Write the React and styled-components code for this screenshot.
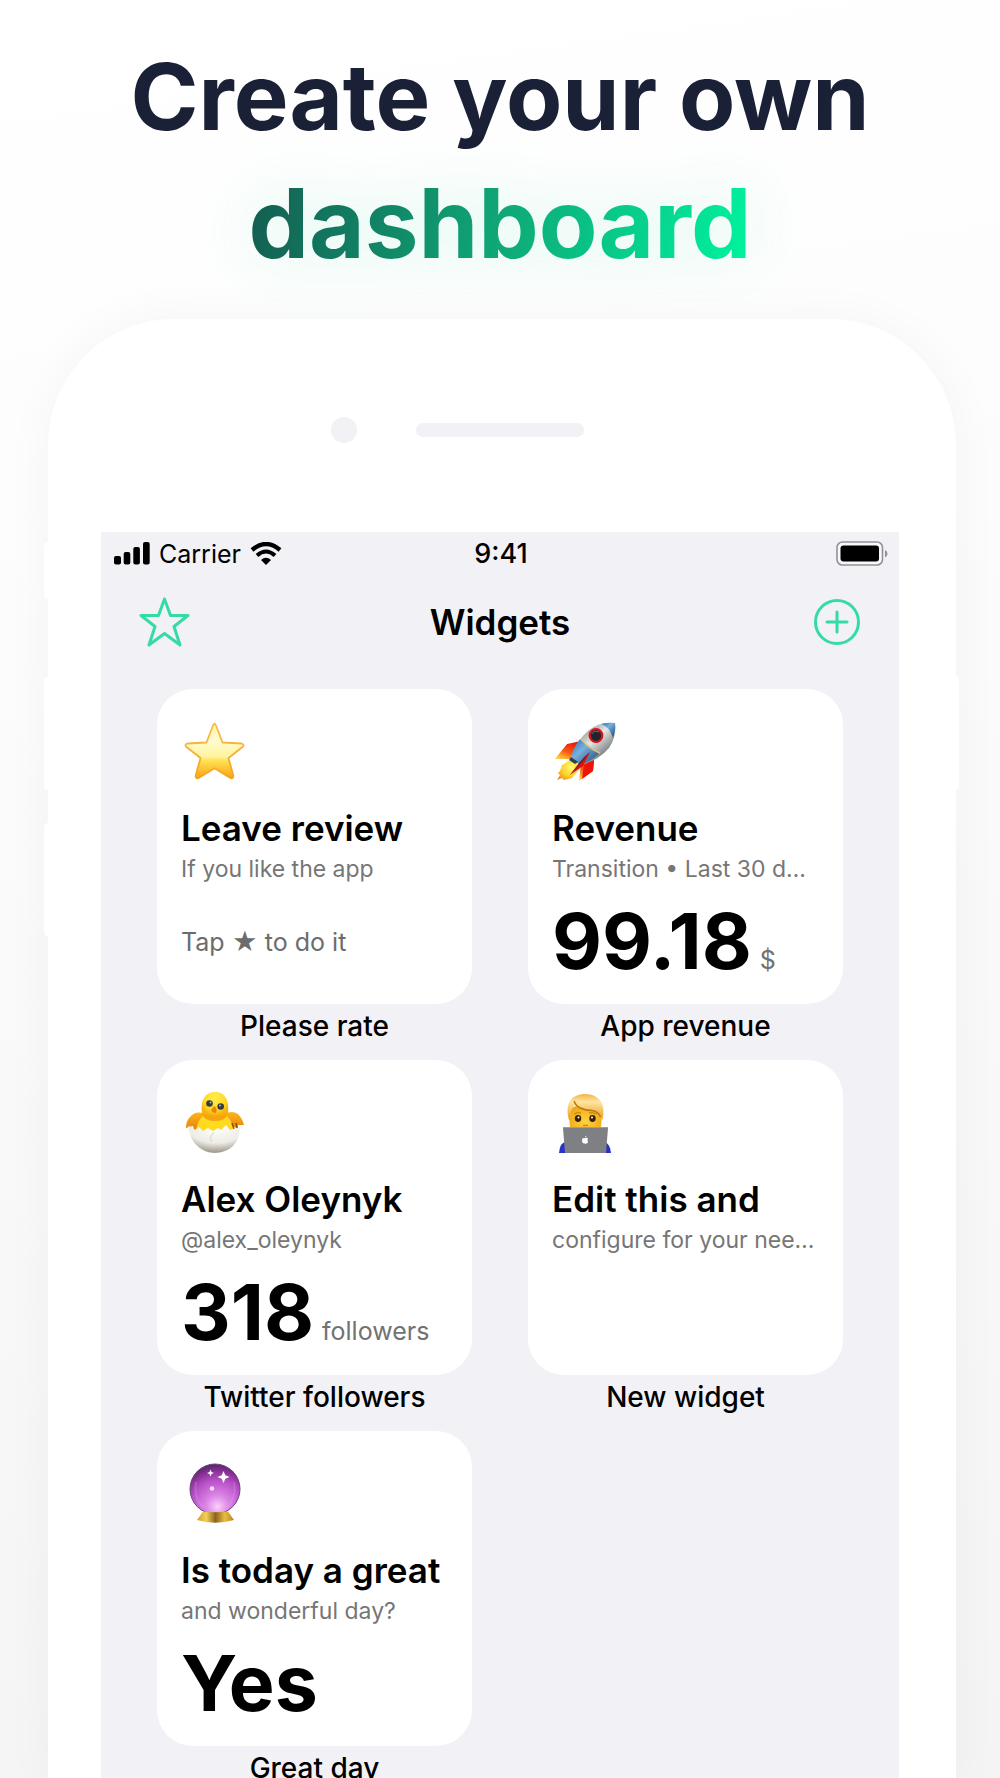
import React from "react";
import styled, { createGlobalStyle, css } from "styled-components";

const GlobalStyle = createGlobalStyle`
  * { box-sizing: border-box; }
  body {
    margin: 0;
    background: #ffffff;
    font-family: Inter, "Liberation Sans", sans-serif;
    color: #000000;
  }
`;

const ACCENT = "#35dba5";
const SURFACE = "#f2f1f6";

const Page = styled.main`
  display: flex;
  flex-direction: column;
  height: 100vh;
  overflow: hidden;
  background: linear-gradient(172deg, #ffffff 0%, #fdfdfd 25%, #f4f4f4 100%);
`;

const Headline = styled.h1`
  margin: 0;
  padding: 34px 24px 33px;
  text-align: center;
  font-size: 92px;
  line-height: 126px;
  font-weight: 700;
  color: #1a2036;
`;

const Highlight = styled.span`
  display: block;
  width: fit-content;
  margin: 0 auto;
  font-size: 96px;
  color: transparent;
  background: linear-gradient(100deg, #145c50 0%, #0fa777 50%, #00f59f 100%);
  background-clip: text;
  -webkit-background-clip: text;
  filter: drop-shadow(0 0 32px rgba(0, 220, 150, 0.16));
`;

const Phone = styled.section`
  position: relative;
  flex: 1 0 auto;
  display: flex;
  flex-direction: column;
  margin: 0 44px 0 48px;
  padding: 0 57px 0 53px;
  border-radius: 126px 126px 0 0;
  background: #ffffff;
  box-shadow: 0 0 50px rgba(0, 0, 0, 0.04);
`;

const SideKey = styled.span`
  position: absolute;
  top: ${(p) => p.$top}px;
  width: 4px;
  height: ${(p) => p.$height}px;
  background: #ffffff;
  ${(p) =>
    p.$right
      ? css`right: -3px; border-radius: 0 4px 4px 0;`
      : css`left: -4px; border-radius: 4px 0 0 4px;`}
`;

const Bezel = styled.div`
  display: grid;
  grid-template-columns: 1fr 168px 1fr;
  align-items: center;
  height: 213px;
  padding-top: 9px;
`;

const Camera = styled.span`
  justify-self: end;
  width: 26px;
  height: 26px;
  margin-right: 59px;
  border-radius: 50%;
  background: ${SURFACE};
`;

const Speaker = styled.span`
  height: 14px;
  border-radius: 7px;
  background: ${SURFACE};
`;

const Screen = styled.div`
  flex: 1;
  background: ${SURFACE};
`;

const StatusBar = styled.div`
  display: grid;
  grid-template-columns: 1fr auto 1fr;
  align-items: center;
  height: 44px;
  padding: 0 11px 0 13px;
  font-size: 25px;
  line-height: 32px;
`;

const Signal = styled.div`
  display: flex;
  align-items: center;
  gap: 9px;
`;

const Clock = styled.time`
  font-size: 27px;
  font-weight: 500;
`;

const BatteryIcon = styled.svg`
  justify-self: end;
`;

const NavBar = styled.header`
  display: grid;
  grid-template-columns: 1fr auto 1fr;
  align-items: center;
  height: 92px;
  padding: 0 38px;
`;

const NavTitle = styled.h2`
  margin: 0;
  font-size: 35px;
  line-height: 40px;
  font-weight: 600;
`;

const IconButton = styled.button`
  display: flex;
  justify-self: ${(p) => (p.$end ? "end" : "start")};
  padding: 0;
  border: 0;
  background: none;
  color: ${ACCENT};
  cursor: pointer;
`;

const WidgetGrid = styled.ul`
  display: grid;
  grid-template-columns: repeat(2, minmax(0, 1fr));
  gap: 18px 56px;
  margin: 0;
  padding: 21px 56px 0;
  list-style: none;
`;

const Card = styled.article`
  display: flex;
  flex-direction: column;
  aspect-ratio: 1;
  padding: 30px 24px 0;
  border-radius: 36px;
  background: #ffffff;
`;

const CardTitle = styled.h3`
  margin: 25px 0 5px;
  font-size: 35px;
  line-height: 40px;
  font-weight: 600;
  white-space: nowrap;
`;

const Subtitle = styled.p`
  margin: 0;
  font-size: 23px;
  line-height: 32px;
  color: #767676;
  white-space: nowrap;
`;

const ValueRow = styled.div`
  display: flex;
  align-items: baseline;
  gap: 8px;
  margin-top: 16px;
  line-height: 80px;
  white-space: nowrap;
`;

const Value = styled.strong`
  font-size: 77px;
  font-weight: 700;
`;

const Note = styled.span`
  font-size: 25px;
  color: #727272;
`;

const Hint = styled.p`
  margin: 17px 0 0;
  font-size: 25px;
  line-height: 80px;
  color: #6c6c6c;
  white-space: nowrap;
`;

const Caption = styled.p`
  margin: 6px 0 0;
  text-align: center;
  font-size: 28px;
  line-height: 32px;
  font-weight: 500;
`;

const StarEmoji = () => (
  <svg width="64" height="64" viewBox="-1 0 64 64" aria-hidden="true">
    <defs>
      <linearGradient id="starFill" x1="0" y1="0" x2="0" y2="1">
        <stop offset="0" stopColor="#fff2a0" />
        <stop offset=".3" stopColor="#fffbd2" />
        <stop offset=".6" stopColor="#fff49c" />
        <stop offset=".68" stopColor="#ffe052" />
        <stop offset="1" stopColor="#fba313" />
      </linearGradient>
      <linearGradient id="starEdge" x1="0" y1="0" x2="0" y2="1">
        <stop offset="0" stopColor="#f7bd4c" />
        <stop offset="1" stopColor="#f5a51c" />
      </linearGradient>
    </defs>
    <path d="M31 6.500 Q32.500 3 34 6.500 L40.500 23.500 L59.500 24.500 Q63 25.500 60.500 28 L46.500 39 L51.300 56.500 Q51.500 60.500 48 58.800 L32.500 49.200 L17 58.800 Q13.500 60.500 13.700 56.500 L18.500 39 L4.500 28 Q2 25.500 5.500 24.500 L24.500 23.500 Z" fill="url(#starFill)" stroke="url(#starEdge)" strokeWidth="1.800" strokeLinejoin="round" />
  </svg>
);

const RocketEmoji = () => (
  <svg width="64" height="64" viewBox="-1 0 64 64" aria-hidden="true">
    <defs>
      <linearGradient id="hull" x1=".2" y1=".2" x2=".75" y2=".8">
        <stop offset="0" stopColor="#8c9295" />
        <stop offset=".45" stopColor="#e6e7e3" />
        <stop offset="1" stopColor="#73777a" />
      </linearGradient>
      <linearGradient id="blueHull" x1="0" y1="0" x2="1" y2="1">
        <stop offset="0" stopColor="#2b6ca8" />
        <stop offset=".4" stopColor="#78b0de" />
        <stop offset="1" stopColor="#1a426e" />
      </linearGradient>
      <linearGradient id="fin" x1=".8" y1="0" x2=".2" y2="1">
        <stop offset="0" stopColor="#e80d08" />
        <stop offset=".6" stopColor="#fa5b12" />
        <stop offset="1" stopColor="#ffd23c" />
      </linearGradient>
      <radialGradient id="flame" cx=".6" cy=".4" r=".7">
        <stop offset="0" stopColor="#fffa72" />
        <stop offset=".6" stopColor="#ffd02c" />
        <stop offset="1" stopColor="#f08c18" />
      </radialGradient>
    </defs>
    <path d="M28 22 L14 25 L2 40 L18 40 Z" fill="url(#fin)" />
    <path d="M28 44 L26 62 L40 52 L41 41 Z" fill="url(#fin)" />
    <path d="M31 46 L29 60 L40 52 L41 41 Z" fill="#ee1207" />
    <path d="M19 40 L9 46 L7 52 L5 54 L7 56 L4 61 L9 59 L11 61 L19 59 L28 48 Z" fill="url(#flame)" />
    <path d="M18 39 Q22 23 36 11 Q48 2 62 4 Q64 17 56 29 Q45 42 27 46 Z" fill="url(#hull)" />
    <path d="M18 39 Q20 29 27 20 L46 35 Q37 43 27 46 Z" fill="url(#blueHull)" />
    <path d="M48 5 Q55 3 62 4 Q63 11 60 19 Q56 7 48 5 Z" fill="url(#blueHull)" />
    <path d="M28 20 Q36 30 47 34" stroke="#d8c57b" strokeWidth="1.500" fill="none" />
    <circle cx="43" cy="16.500" r="6.300" fill="#20252c" stroke="#d01520" strokeWidth="2.300" />
    <path d="M39 15 Q41 11 46 13" stroke="#65717b" strokeWidth="1" fill="none" />
    <path d="M37 33 L31 38 L17 56 L30 47 Z" fill="#d71413" />
    <path d="M37 33 L29 43 L17 56 L27 43 Z" fill="#68202b" />
    <path d="M18 38 L25 43 L22 45 L16 41 Z" fill="#31404f" />
  </svg>
);

const ChickEmoji = () => (
  <svg width="64" height="64" viewBox="-1 0 64 64" aria-hidden="true">
    <defs>
      <radialGradient id="chick" cx=".5" cy=".2" r=".6">
        <stop offset="0" stopColor="#fff04f" />
        <stop offset=".7" stopColor="#ffd822" />
        <stop offset="1" stopColor="#f7b20f" />
      </radialGradient>
      <linearGradient id="wing" x1="0" y1="0" x2="0" y2="1">
        <stop offset="0" stopColor="#ffb41c" />
        <stop offset="1" stopColor="#e58109" />
      </linearGradient>
      <radialGradient id="shell" cx=".55" cy=".1" r=".9">
        <stop offset="0" stopColor="#fffffd" />
        <stop offset=".6" stopColor="#edece5" />
        <stop offset="1" stopColor="#9b958a" />
      </radialGradient>
    </defs>
    <path d="M23 24 Q14 20 8 27 Q4 31 4 38 L11 36 L12 40 L19 38 Z" fill="url(#wing)" />
    <path d="M42 24 Q50 20 56 24 Q60 28 62 35 L56 35 L56 39 L51 36 L48 40 Z" fill="url(#wing)" />
    <path d="M14 42 Q15 31 21 26 H45 Q51 32 52 42 Z" fill="#ffdb20" />
    <path d="M20 23 C18 10 23 2 33 2 C44 2 47 11 46 23 Q44 31 33 31 Q22 31 20 23 Z" fill="url(#chick)" />
    <path d="M20 23 Q32 29 46 23 Q44 31 33 31 Q22 31 20 23 Z" fill="#f49d10" opacity=".65" />
    <circle cx="27.500" cy="13.500" r="3.300" fill="#343b3d" />
    <circle cx="38.700" cy="16.500" r="3.300" fill="#343b3d" />
    <circle cx="28.500" cy="12.500" r="1" fill="#a5b3b5" />
    <circle cx="38" cy="15.500" r="1" fill="#a5b3b5" />
    <path d="M32 16 Q36 18 34 22.500 Q31 24 29 20 Z" fill="#e98408" />
    <path d="M50 33 L52 39 M54 33 L55 38" stroke="#8a520c" strokeWidth="1.500" />
    <path d="M6 36 L10 37 L13 40 L17 37 L21 41 L26 38 L31 41 L36 38 L39 40 L44 35 L48 40 L58 37 Q57 62 32 63 Q10 61 6 36 Z" fill="url(#shell)" />
    <path d="M32 42 L28 48 L30 52" fill="none" stroke="#dcd5c6" />
  </svg>
);

const CoderEmoji = () => (
  <svg width="64" height="64" viewBox="0 0 64 64" aria-hidden="true">
    <defs>
      <radialGradient id="face" cx=".5" cy=".6" r=".6">
        <stop offset="0" stopColor="#ffd33e" />
        <stop offset="1" stopColor="#efa512" />
      </radialGradient>
      <linearGradient id="hair" x1="0" y1="0" x2="0" y2="1">
        <stop offset="0" stopColor="#f0b54a" />
        <stop offset=".3" stopColor="#ffe5a0" />
        <stop offset="1" stopColor="#e99b1d" />
      </linearGradient>
    </defs>
    <path d="M7 63 Q8 52 14 52 H53 Q58 54 59 63 Z" fill="#2a31c8" />
    <path d="M17 20 Q17 32 19 44 H48 Q50 32 50 20 Q35 7 17 20 Z" fill="url(#face)" />
    <path d="M17 30 C12 11 21 4 34 4 C49 5 54 16 50.500 30 L48.500 25 Q44 20 33 20 Q27 19 23 15 Q18 19 18 30 Z" fill="url(#hair)" />
    <path d="M22 11 Q25 20 40 20.500 Q46 21 48.500 27" fill="none" stroke="#b87412" strokeWidth="1.300" />
    <path d="M22 24 Q25 22 29 23 M37 23 Q41 22 44.500 24" stroke="#b5790f" strokeWidth="1" fill="none" />
    <ellipse cx="26" cy="28.500" rx="3.200" ry="3.400" fill="#3b2108" />
    <ellipse cx="40.500" cy="28.500" rx="3.200" ry="3.400" fill="#3b2108" />
    <circle cx="26.500" cy="27.500" r="1" fill="#ffffff" />
    <circle cx="40" cy="27.500" r="1" fill="#ffffff" />
    <path d="M31 35.500 H36" fill="none" stroke="#d18a12" strokeWidth="1.500" />
    <path d="M11 38 Q11 37 12 37 H55 Q56 37 56 38 L54 63 H13 Z" fill="#7f8083" />
    <path d="M11.500 37.500 H55.500" stroke="#9d9ea1" strokeWidth="1" />
    <path d="M33 48.200 Q35 47 36 48.500 Q34.500 50 36.200 52 Q34.500 54.500 33 53.500 Q30.500 54 30 51 Q30 47 33 48.200 Z M33 47.500 Q33 45.800 34.700 45.500 Q34.500 47 33 47.500 Z" fill="#ffffff" />
  </svg>
);

const CrystalEmoji = () => (
  <svg width="64" height="64" viewBox="-1 0 64 64" aria-hidden="true">
    <defs>
      <radialGradient id="orb" cx=".55" cy=".85" r=".88">
        <stop offset="0" stopColor="#fbd0fb" />
        <stop offset=".25" stopColor="#dd87e6" />
        <stop offset=".6" stopColor="#b850c8" />
        <stop offset=".85" stopColor="#7c2c8a" />
        <stop offset="1" stopColor="#432653" />
      </radialGradient>
      <linearGradient id="stand" x1="0" y1="0" x2="1" y2="0">
        <stop offset="0" stopColor="#d39c2b" />
        <stop offset=".25" stopColor="#f1d15b" />
        <stop offset=".5" stopColor="#8c621b" />
        <stop offset=".75" stopColor="#e8bd41" />
        <stop offset="1" stopColor="#ba8326" />
      </linearGradient>
    </defs>
    <circle cx="33" cy="28" r="25" fill="url(#orb)" stroke="#67457c" strokeWidth="1" />
    <path d="M14 21 Q11 39 23 47 M52 21 Q55 37 44 47" fill="none" stroke="#e9a8ef" strokeWidth="2" opacity=".25" />
    <path d="M21 50.500 Q33 52 46 50.500 L52 59 Q33 64.500 15 59 Z" fill="url(#stand)" />
    <path d="M41.500 10 L43.300 14.200 L47.500 16 L43.300 17.800 L41.500 22 L39.700 17.800 L35.500 16 L39.700 14.200 Z" fill="#ffffff" />
    <path d="M28.500 8.500 L29.500 11 L32 12 L29.500 13 L28.500 15.500 L27.500 13 L25 12 L27.500 11 Z" fill="#ffffff" />
    <circle cx="30" cy="27.500" r="2.300" fill="#f8d6fa" />
  </svg>
);

const SignalBars = () => (
  <svg width="36" height="24" viewBox="0 0 36 24" role="img" aria-label="Signal strength">
    <rect x="0" y="14" width="7" height="8.500" rx="2" />
    <rect x="9.700" y="10" width="6.600" height="12.500" rx="2" />
    <rect x="19.300" y="5" width="6.600" height="17.500" rx="2" />
    <rect x="29" y="0" width="6.700" height="22.500" rx="2" />
  </svg>
);

const Wifi = () => (
  <svg width="32" height="24" viewBox="0 0 32 24" role="img" aria-label="Wi-Fi">
    <path d="M2 8 Q16 -4 30 8" fill="none" stroke="#000" strokeWidth="4.300" />
    <path d="M7 13.500 Q16 5.500 25 13.500" fill="none" stroke="#000" strokeWidth="4" />
    <path d="M11 18 Q16 13.500 21 18 L16 23 Z" />
  </svg>
);

const widgets = [
  { icon: <StarEmoji />, title: "Leave review", subtitle: "If you like the app", hint: true, caption: "Please rate" },
  { icon: <RocketEmoji />, title: "Revenue", subtitle: "Transition • Last 30 d…", value: "99.18", unit: "$", caption: "App revenue" },
  { icon: <ChickEmoji />, title: "Alex Oleynyk", subtitle: "@alex_oleynyk", value: "318", unit: "followers", caption: "Twitter followers" },
  { icon: <CoderEmoji />, title: "Edit this and", subtitle: "configure for your nee…", caption: "New widget" },
  { icon: <CrystalEmoji />, title: "Is today a great", subtitle: "and wonderful day?", value: "Yes", caption: "Great day" },
];

const Widget = ({ icon, title, subtitle, value, unit, hint, caption }) => (
  <li>
    <Card>
      {icon}
      <CardTitle>{title}</CardTitle>
      <Subtitle>{subtitle}</Subtitle>
      {hint && <Hint>Tap ★ to do it</Hint>}
      {value && (
        <ValueRow>
          <Value>{value}</Value>
          {unit && <Note>{unit}</Note>}
        </ValueRow>
      )}
    </Card>
    <Caption>{caption}</Caption>
  </li>
);

export default function App() {
  return (
    <Page>
      <GlobalStyle />
      <Headline>
        Create your own <Highlight>dashboard</Highlight>
      </Headline>
      <Phone>
        <SideKey $top={223} $height={57} />
        <SideKey $top={358} $height={113} />
        <SideKey $top={504} $height={113} />
        <SideKey $right $top={357} $height={114} />
        <Bezel>
          <Camera />
          <Speaker />
        </Bezel>
        <Screen>
          <StatusBar>
            <Signal>
              <SignalBars />
              <span>Carrier</span>
              <Wifi />
            </Signal>
            <Clock>9:41</Clock>
            <BatteryIcon width="52" height="26" viewBox="0 0 52 26" role="img" aria-label="Battery full">
              <rect x="1" y="1" width="45.500" height="23" rx="5.500" fill="#f8f8fa" stroke="#929196" strokeWidth="1.600" />
              <rect x="4.500" y="4.500" width="38.500" height="16" rx="3" />
              <path d="M49 9 Q51.500 10 51.500 12.800 Q51.500 15.500 49 16.500 Z" fill="#929196" />
            </BatteryIcon>
          </StatusBar>
          <NavBar>
            <IconButton type="button" aria-label="Rate the app">
              <svg width="51" height="50" viewBox="0 0 51 50" fill="none" stroke="currentColor" strokeWidth="3" strokeLinejoin="round">
                <path d="M25.500 2 L31.500 18.500 H49 L35 29.500 L41 48 L25.500 36.500 L10 48 L16 29.500 L2 18.500 H19.500 Z" />
              </svg>
            </IconButton>
            <NavTitle>Widgets</NavTitle>
            <IconButton type="button" $end aria-label="Add widget">
              <svg width="48" height="48" viewBox="0 0 48 48" fill="none" stroke="currentColor" strokeWidth="3" strokeLinecap="round">
                <circle cx="24" cy="24" r="21.500" />
                <path d="M24 14 V34 M14 24 H34" />
              </svg>
            </IconButton>
          </NavBar>
          <WidgetGrid>
            {widgets.map((w) => (
              <Widget key={w.caption} {...w} />
            ))}
          </WidgetGrid>
        </Screen>
      </Phone>
    </Page>
  );
}
